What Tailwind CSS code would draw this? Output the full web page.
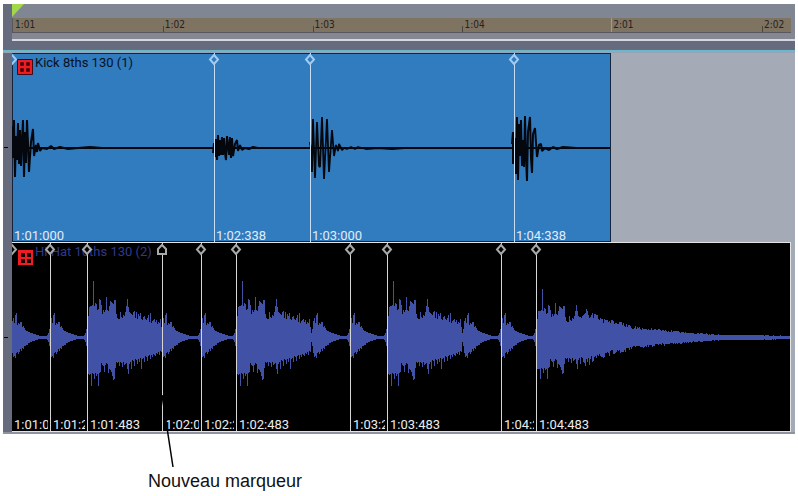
<!DOCTYPE html>
<html lang="fr">
<head>
  <meta charset="UTF-8">
  <meta name="viewport" content="width=device-width, initial-scale=1.0">
  <title>Marqueurs de tempo</title>
  <script src="https://cdn.jsdelivr.net/npm/@tailwindcss/browser@4"></script>
</head>
<body class="bg-white font-['Roboto',sans-serif] text-[13px] leading-4">

  <main class="relative overflow-hidden pt-1 px-[3px]">

    <!-- Ruler -->
    <header class="flex bg-[#666b7d]">
      <div class="w-[9px] shrink-0"></div>
      <div class="relative grow bg-[#808793]">
        <svg class="block h-[14px] w-3" viewBox="0 0 12 14"><path d="M0 0h12L0 13z" fill="#a0d848"/></svg>
        <ol class="mr-1 grid h-[15px] grid-cols-[150fr_150fr_150fr_149fr_151fr_29fr] border-b border-l border-[#585660] bg-[#7f7362] font-['DejaVu_Sans_Condensed','DejaVu_Sans',sans-serif] text-[10px] leading-[14px] whitespace-nowrap text-[#25221f]">
          <li class="pl-0.5">1:01</li>
          <li class="flex"><i class="mt-2 mr-px h-1.5 w-px bg-[#4a453f]"></i>1:02</li>
          <li class="flex"><i class="mt-2 mr-px h-1.5 w-px bg-[#4a453f]"></i>1:03</li>
          <li class="flex"><i class="mt-2 mr-px h-1.5 w-px bg-[#4a453f]"></i>1:04</li>
          <li class="flex"><i class="mr-px h-3.5 w-px bg-[#a49a8b]"></i>2:01</li>
          <li class="flex"><i class="mt-2 mr-px h-1.5 w-px bg-[#4a453f]"></i>2:02</li>
        </ol>
        <div class="h-2 border-b-2 border-[#d7d8e6] bg-[#858791]"></div>
      </div>
    </header>
    <div class="h-[9px] bg-[#666b7d]"></div>
    <div class="h-[3px] border-b border-[#97a3b6] bg-[#6db7cb]"></div>

    <!-- Track 1 -->
    <section class="flex bg-[#a4abb7]">
      <div class="flex w-[9px] shrink-0 items-center bg-[#666b7d]"><i class="ml-px h-px w-1 bg-black"></i></div>
      <div class="relative grid h-[189px] grow grid-cols-[202fr_96fr_204fr_97fr_184fr] overflow-hidden leading-[13px]">
        <div class="col-span-4 col-start-1 row-start-1 border border-[#14243c] bg-[#317bbf]"></div>
        <svg id="kick-wave" class="absolute inset-0 h-full w-full" viewBox="12 53 783 189" preserveAspectRatio="none" fill="none" stroke="#04080e" stroke-linejoin="bevel"></svg>
        <div data-marker="kick" class="relative col-start-1 row-start-1 flex min-w-0 items-end"><span class="overflow-hidden pl-0.5 whitespace-nowrap text-[#e2ecf8]">1:01:000</span></div>
        <div data-marker="kick" class="relative col-start-2 row-start-1 flex min-w-0 items-end border-l border-[#c8dcf2]"><span class="overflow-hidden pl-px whitespace-nowrap text-[#e2ecf8]">1:02:338</span></div>
        <div data-marker="kick" class="relative col-start-3 row-start-1 flex min-w-0 items-end border-l border-[#c8dcf2]"><span class="overflow-hidden pl-px whitespace-nowrap text-[#e2ecf8]">1:03:000</span></div>
        <div data-marker="kick" class="relative col-start-4 row-start-1 flex min-w-0 items-end border-l border-[#c8dcf2]"><span class="overflow-hidden pl-px whitespace-nowrap text-[#e2ecf8]">1:04:338</span></div>
        <div class="absolute top-0.5 left-[5px] flex gap-0.5 leading-4">
          <svg class="mt-1 h-4 w-4" viewBox="0 0 16 16" fill="none">
            <path d="M.5 .5h15v15H.5z" fill="#f01c24" stroke="#400b14"/>
            <path d="M4 4h2v2H4zM10 4h2v2h-2zM4 10h2v2H4zM10 10h2v2h-2z" stroke="#3a0508" stroke-width="1.5"/>
          </svg>
          <h2 class="text-[#07111f]">Kick 8ths 130 (1)</h2>
        </div>
      </div>
    </section>

    <!-- Track 2 -->
    <section class="flex border-b-2 border-[#8d939f] bg-[#a4abb7]">
      <div class="flex w-[9px] shrink-0 items-center bg-[#666b7d]"><i class="ml-px h-px w-1 bg-black"></i></div>
      <div class="relative mr-1 grid h-[190px] grow grid-cols-[38fr_37fr_75fr_39fr_35fr_114fr_37fr_114fr_35fr_254fr] overflow-hidden border-t border-r border-b border-[#e4e4e4] bg-black leading-[13px] text-[#ececec]">
        <svg id="hat-wave" class="absolute inset-0 h-full w-full" viewBox="12 243 778 188" preserveAspectRatio="none" fill="#4152a6"></svg>
        <div class="absolute top-px left-1.5 flex gap-0.5 leading-4">
          <svg class="mt-1.5 h-[15px] w-[15px]" viewBox="0 0 15 15">
            <path d="M0 0h15v15H0z" fill="#f01c24"/>
            <path d="M3 3h4v4H3zM9 3h4v4H9zM3 9h4v4H3zM9 9h4v4H9z" fill="#180204"/>
          </svg>
          <h2 class="text-[#32398c]">Hi Hat 16ths 130 (2)</h2>
        </div>
        <div data-marker="hat" class="relative flex min-w-0 items-end"><span class="mr-0.5 overflow-hidden pl-0.5 whitespace-nowrap">1:01:000</span></div>
        <div data-marker="hat" class="relative flex min-w-0 items-end border-l border-[#d6d6d6]"><span class="mr-0.5 overflow-hidden pl-0.5 whitespace-nowrap">1:01:241</span></div>
        <div data-marker="hat" class="relative flex min-w-0 items-end border-l border-[#d6d6d6]"><span class="mr-0.5 overflow-hidden pl-0.5 whitespace-nowrap">1:01:483</span></div>
        <div data-marker="new" class="relative flex min-w-0 items-end border-l border-[#d6d6d6]"><span class="mr-0.5 overflow-hidden pl-0.5 whitespace-nowrap">1:02:000</span></div>
        <div data-marker="hat" class="relative flex min-w-0 items-end border-l border-[#d6d6d6]"><span class="mr-0.5 overflow-hidden pl-0.5 whitespace-nowrap">1:02:241</span></div>
        <div data-marker="hat" class="relative flex min-w-0 items-end border-l border-[#d6d6d6]"><span class="mr-0.5 overflow-hidden pl-0.5 whitespace-nowrap">1:02:483</span></div>
        <div data-marker="hat" class="relative flex min-w-0 items-end border-l border-[#d6d6d6]"><span class="mr-0.5 overflow-hidden pl-0.5 whitespace-nowrap">1:03:241</span></div>
        <div data-marker="hat" class="relative flex min-w-0 items-end border-l border-[#d6d6d6]"><span class="mr-0.5 overflow-hidden pl-0.5 whitespace-nowrap">1:03:483</span></div>
        <div data-marker="hat" class="relative flex min-w-0 items-end border-l border-[#d6d6d6]"><span class="mr-0.5 overflow-hidden pl-0.5 whitespace-nowrap">1:04:241</span></div>
        <div data-marker="hat" class="relative flex min-w-0 items-end border-l border-[#d6d6d6]"><span class="mr-0.5 overflow-hidden pl-0.5 whitespace-nowrap">1:04:483</span></div>
      </div>
    </section>

    <!-- Callout -->
    <svg class="absolute top-[395px] left-[20%] h-[73px] w-[14px]" viewBox="0 0 14 73"><path d="M2 0L13 72" stroke="#000" stroke-width="1.5"/></svg>
    <p class="mt-[35px] ml-[145px] font-['Liberation_Sans',sans-serif] text-[18px] leading-6 text-[#111]">Nouveau marqueur</p>
  </main>

  <script>
    // Marker handles
    const shapes = {
      kick: '<path d="M6 2L10 6.500L6 11L2 6.500z" fill="#317bbf" stroke="#a3ccf3" stroke-width="2"/>',
      hat: '<path d="M6 2L10 6.500L6 11L2 6.500z" fill="#000" stroke="#a9a9a9" stroke-width="2"/>',
      new: '<path d="M2 11V6L6 2L10 6V11z" fill="#000" stroke="#a9a9a9" stroke-width="2"/>'
    };
    document.querySelectorAll("[data-marker]").forEach(el => {
      const left = el.classList.contains("border-l") ? "-left-[7px]" : "-left-[6px]";
      el.insertAdjacentHTML("beforeend", `<svg class="absolute top-0 ${left} h-[13px] w-3" viewBox="0 0 12 13">${shapes[el.dataset.marker]}</svg>`);
    });

    // Kick: oscillation peaks as [x, offset from centre line]
    const kicks = [
      { w: 2, pts: [[12,-22],[13,10],[14,-28],[15,29],[16,-12],[17,12],[18,-25],[19,16],[20,-18],[21,18],[22,-8],[23,-28],[24,29],[25,-16],[26,15],[27,-28],[28,-5],[29,24],[31,-6],[33,-19],[34,8],[36,-3],[37,4],[38,-5],[40,3],[42,0],[47,1],[51,-2],[54,1],[60,-1],[68,1],[78,0],[90,-1],[102,0]] },
      { w: 2, pts: [[213,5],[214,-5],[215,9],[216,-9],[217,12],[218,-13],[219,8],[220,-8],[221,7],[222,-11],[223,7],[224,-10],[225,5],[226,12],[227,-12],[229,7],[230,-11],[231,10],[232,-10],[233,8],[235,-4],[237,-8],[238,3],[240,-3],[242,2],[245,0],[249,1],[253,-1],[258,0]] },
      { w: 1.8, pts: [[310,-6],[311,2],[312,24],[313,-29],[315,30],[317,-26],[319,18],[320,19],[322,-31],[324,31],[327,-29],[329,24],[332,-18],[334,8],[336,-3],[338,3],[339,-4],[342,2],[344,0],[347,1],[351,-1],[355,1],[358,-1],[366,1],[378,0],[392,1],[404,0]] },
      { w: 2, pts: [[512,-4],[513,-16],[513,16],[515,-10],[516,26],[517,-31],[518,32],[519,-24],[520,8],[521,-28],[522,18],[523,-8],[524,19],[525,-32],[526,10],[527,33],[528,-16],[530,-31],[531,10],[532,25],[533,-14],[535,-20],[537,9],[539,-3],[541,-4],[542,3],[545,0],[549,2],[553,-1],[557,1],[563,-1],[576,0]] }
    ];
    document.getElementById("kick-wave").innerHTML = '<path d="M12 148H610" stroke-width="2"/>' +
      kicks.map(k => `<path stroke-width="${k.w}" d="M${k.pts.map(([x, y]) => `${x} ${148 + y}`).join("L")}"/>`).join("");

    // Hi-hat: one amplitude per pixel, above and below the centre line
    const openUp = [20,21,30,31,31,32,56,31,34,33,27,28,38,37,32,23,27,25,27,40,27,26,31,36,35,34,33,37,37,23,19,18,18,25,20,19,22,21,25,31,38,30,25,24,23,22,25,26,19,25,18,23,21,24,18,17,20,21,18,17,19,22,15,24,14,16,17,18,15,17,13,15,14,18,10];
    const openDown = [30,36,37,36,48,35,36,41,35,38,36,48,35,34,25,27,28,34,27,25,26,35,31,32,34,38,42,41,30,24,25,24,28,24,25,29,24,27,26,25,31,36,26,24,31,22,23,28,21,22,26,21,24,20,31,21,20,24,18,19,23,18,17,21,17,19,16,17,18,15,16,14,17,13,14];
    const closedUp = [16,19,14,22,24,12,14,13,15,15,10,11,9,7,6,6,5,5,4,4,4,3,3,3,2,2,2,1,1];
    const closedDown = [15,19,18,20,15,14,16,14,11,13,10,11,8,8,7,7,5,5,4,4,3,3,3,2,2,2,1,1,1];
    const tail = [[584,24],[600,17],[620,12],[640,8],[665,6],[690,4],[720,2],[750,2],[790,1]];
    const up = {}, down = {};

    function hit(x, a, b) {
      [2, 4, 8].forEach((v, i) => {
        up[x - 3 + i] = Math.max(up[x - 3 + i] || 1, v);
        down[x - 3 + i] = Math.max(down[x - 3 + i] || 1, v);
      });
      a.forEach((v, i) => { up[x + i] = v; down[x + i] = b[i]; });
    }

    [12, 50, 162, 201, 350, 501].forEach(x => hit(x, closedUp, closedDown));
    [87, 236, 387].forEach(x => hit(x, openUp, openDown));
    [162, 313, 464].forEach(x => hit(x, closedUp, closedDown));
    hit(536, openUp.slice(0, 48).map(v => Math.round(v * 0.85)), openDown.slice(0, 48).map(v => Math.round(v * 0.85)));

    // Long decay after the last hit
    const jitter = n => Math.abs(Math.sin(n * 12.9898) * 43758.5453) % 1;
    for (let i = 1; i < tail.length; i++) {
      const [x0, a0] = tail[i - 1], [x1, a1] = tail[i];
      for (let x = x0; x < x1; x++) {
        const a = a0 + (a1 - a0) * (x - x0) / (x1 - x0);
        up[x] = Math.max(1, Math.round(a * (0.85 + jitter(x) * 0.4)));
        down[x] = Math.max(1, Math.round(a * (0.85 + jitter(x + 500) * 0.4)));
      }
    }

    let bars = "";
    for (let x = 12; x < 790; x++) {
      const a = up[x] || 1, b = down[x] || 1;
      bars += `M${x} ${337 - a}h1v${a + b + 1}h-1z`;
    }
    document.getElementById("hat-wave").innerHTML = `<path shape-rendering="crispEdges" d="${bars}"/>`;
  </script>
</body>
</html>
